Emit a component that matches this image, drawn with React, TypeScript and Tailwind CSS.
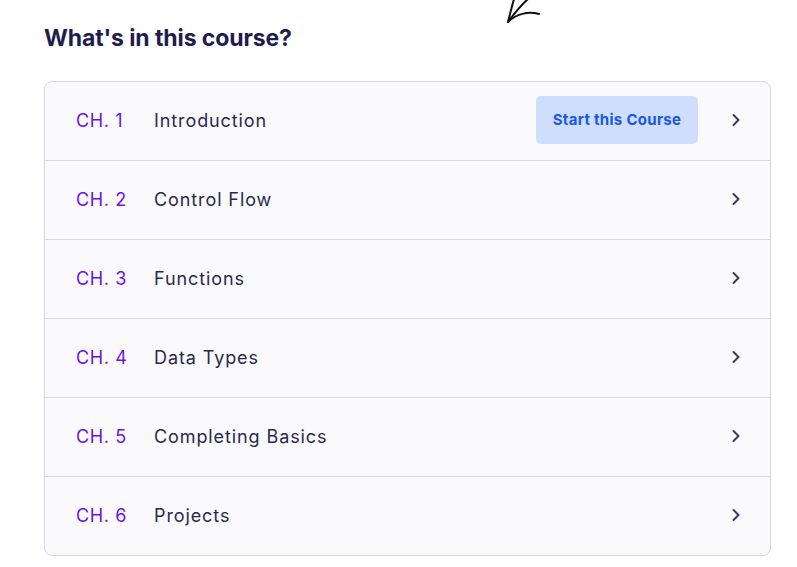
import { ChevronRight } from 'lucide-react'

const chapters = [
  { n: 1, title: 'Introduction' },
  { n: 2, title: 'Control Flow' },
  { n: 3, title: 'Functions' },
  { n: 4, title: 'Data Types' },
  { n: 5, title: 'Completing Basics' },
  { n: 6, title: 'Projects' },
]

function Arrow() {
  return (
    <svg className="absolute left-[500px] top-0" width="48" height="28" viewBox="0 0 48 28" fill="none">
      <path d="M8 22 C 10 14, 12 6, 14 -1" stroke="#111" strokeWidth="2" strokeLinecap="round" />
      <path d="M8 22 C 14 14, 20 6, 28 -1" stroke="#111" strokeWidth="2" strokeLinecap="round" />
      <path d="M8 22 C 16 14, 28 11, 39 14" stroke="#111" strokeWidth="2" strokeLinecap="round" />
    </svg>
  )
}

export default function App() {
  return (
    <div className="relative w-[797px] h-[567px] bg-white overflow-hidden" style={{ fontFamily: 'Inter, "Noto Sans", sans-serif' }}>
      <Arrow />
      <div className="pl-[44px] pr-[26px] pt-[23px]">
        <h2 className="text-[23px] leading-[30px] font-bold text-[#1f1d4d] tracking-[-0.1px]">What's in this course?</h2>
        <div className="mt-[28px] rounded-[8px] border border-[#d2d8e5] bg-[#fafafd] overflow-hidden">
          {chapters.map((c, i) => (
            <div
              key={c.n}
              className={`flex items-center pl-[31px] pr-[24px] pb-[2px] ${i > 0 ? 'h-[79px] border-t border-[#d2d8e5]' : 'h-[78px]'}`}
            >
              <span className="w-[78px] text-[18px] text-[#6a12e6] tracking-[0.6px]">CH. {c.n}</span>
              <span className="flex-1 text-[18px] text-[#2a294b] tracking-[0.9px]">{c.title}</span>
              {i === 0 && (
                <button className="mr-[28px] h-[48px] w-[162px] rounded-[5px] bg-[#cfdffb] text-[15px] font-bold text-[#1b55ee] tracking-[0.3px]">
                  Start this Course
                </button>
              )}
              <ChevronRight size={20} strokeWidth={2.4} className="text-[#3b3968]" />
            </div>
          ))}
        </div>
      </div>
    </div>
  )
}
